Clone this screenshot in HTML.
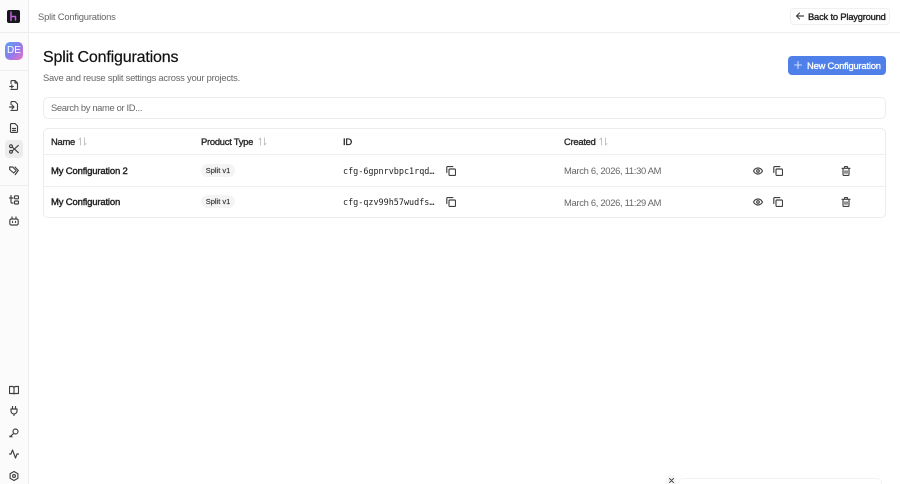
<!DOCTYPE html>
<html><head><meta charset="utf-8"><style>
*{box-sizing:border-box}
html,body{margin:0;padding:0;width:900px;height:484px;overflow:hidden;background:#fff;font-family:"Liberation Sans",sans-serif;color:#1a1a1a}
#r{position:relative;width:900px;height:484px;overflow:hidden;background:#fff}
.a{position:absolute;white-space:nowrap}
svg{position:absolute;fill:none;stroke:#404040;stroke-width:1.150;stroke-linecap:round;stroke-linejoin:round}
.th{font-size:9.400px;-webkit-text-stroke:.35px #2a2a2a;color:#2a2a2a;top:136px;line-height:12px;letter-spacing:-.25px}
.nm{font-size:9.500px;-webkit-text-stroke:.4px #222;color:#222;line-height:12px;left:51px;letter-spacing:-.17px}
.id{font-family:"DejaVu Sans Mono",monospace;font-size:8.450px;color:#222;left:343px;line-height:13px}
.dt{font-size:9.400px;color:#666;left:564px;line-height:12px;letter-spacing:-.3px}
.bd{left:201px;width:34px;height:13px;background:#f4f4f4;border-radius:7px;font-size:7.500px;line-height:13px;text-align:center;color:#333;-webkit-text-stroke:.15px #333}
.l{position:absolute;background:#eeeeee}
</style></head><body><div id="r">
<div class="a" style="left:0;top:0;width:29px;height:484px;background:#fbfbfb;border-right:1px solid #ededed"></div>
<div class="l" style="left:0;top:32px;width:900px;height:1px"></div>
<div class="l" style="left:0;top:70px;width:28px;height:1px"></div>
<div class="l" style="left:0;top:185px;width:28px;height:1px"></div>

<div class="a" style="left:7px;top:10px;width:13px;height:13px;background:#16161d;border-radius:2px"></div>
<svg style="left:7px;top:10px;stroke:#c45fe0;stroke-width:1.500" width="13" height="13" viewBox="0 0 13 13"><path d="M4 2v7M4 6.500h4.500V10M4 9v1.500"/></svg>
<div class="a" style="left:5px;top:42px;width:18px;height:18px;border-radius:5px;background:linear-gradient(135deg,#5aa5ee 0%,#8a7cf0 50%,#ee6fc0 100%);color:#fff;font-size:10px;line-height:18px;text-align:center">DE</div>

<div class="a" style="left:5px;top:140px;width:18px;height:18px;border-radius:4px;background:#ececec"></div>

<svg style="left:9px;top:80px" width="10" height="10" viewBox="0 0 10 10"><path d="M2 3.500V1.500a1 1 0 0 1 1-1h3l2.500 2.500v5.500a1 1 0 0 1-1 1H2M6 .5V3h2.500M.8 6.500h3.500M2.800 5v3"/></svg>
<svg style="left:9px;top:101px" width="10" height="10" viewBox="0 0 10 10"><path d="M2 3.500V1.500a1 1 0 0 1 1-1h3l2.500 2.500v5.500a1 1 0 0 1-1 1H2M.5 6h4.500M3 4l2 2-2 2"/></svg>
<svg style="left:9px;top:123px" width="10" height="10" viewBox="0 0 10 10"><path d="M1.500 1.500a1 1 0 0 1 1-1h3.500l2.500 2.500v5.500a1 1 0 0 1-1 1h-5a1 1 0 0 1-1-1zM3.500 5.500h3M3.500 7.500h3"/></svg>
<svg style="left:9px;top:144px" width="10" height="10" viewBox="0 0 10 10"><circle cx="2" cy="2.200" r="1.400"/><circle cx="2" cy="7.800" r="1.400"/><path d="M3.200 3L9.300 8.600M3.200 7L9.300 1.400"/></svg>
<svg style="left:9px;top:166px" width="10" height="10" viewBox="0 0 10 10"><path d="M.7 3.500V1h3l3.500 3.500-2.500 2.500zM6 1l3.300 3.500L6.200 8.600"/></svg>
<svg style="left:9px;top:195px" width="10" height="10" viewBox="0 0 10 10"><path d="M2 .5v6.500a1 1 0 0 0 1 1h1M.5 3h3.500"/><rect x="5.500" y=".8" width="4" height="3" rx=".8"/><rect x="5.500" y="6" width="4" height="3" rx=".8"/></svg>
<svg style="left:9px;top:216px" width="10" height="10" viewBox="0 0 10 10"><rect x=".8" y="3" width="8.400" height="6" rx="1.500"/><path d="M3 1v2M7 1v2M3.500 5.500v1M6.500 5.500v1"/></svg>

<svg style="left:9px;top:385px" width="10" height="10" viewBox="0 0 10 10"><path d="M5 2.200v6.600M.5 1.500h3A1.500 1.500 0 0 1 5 3a1.500 1.500 0 0 1 1.500-1.500h3v7h-3.500A1 1 0 0 0 5 9a1 1 0 0 0-1-.5H.5z"/></svg>
<svg style="left:9px;top:406px" width="10" height="10" viewBox="0 0 10 10"><path d="M3.500.5v2.500M6.500.5v2.500M2 3h6v2a3 3 0 0 1-6 0zM5 8v1.500"/></svg>
<svg style="left:9px;top:428px" width="10" height="10" viewBox="0 0 10 10"><circle cx="6.500" cy="3.500" r="2.500"/><path d="M4.700 5.300L1 9v-1M2 8l1 1"/></svg>
<svg style="left:9px;top:449px" width="10" height="10" viewBox="0 0 10 10"><path d="M.5 5h1.500l1.500-4 3 8 1.500-4h1.500"/></svg>
<svg style="left:9px;top:471px" width="10" height="10" viewBox="0 0 10 10"><path d="M5 .5l3.900 2.200v4.600L5 9.500 1.100 7.300V2.700z"/><circle cx="5" cy="5" r="1.400"/></svg>

<div class="a" style="left:38px;top:10px;font-size:9.400px;line-height:13px;color:#666;letter-spacing:-.18px">Split Configurations</div>

<div class="a" style="left:790px;top:8px;width:100px;height:17px;border:1px solid #f0f0f0;border-radius:4px;background:#fff"></div>
<svg style="left:795px;top:11px" width="10" height="10" viewBox="0 0 10 10"><path d="M8.500 5h-7M4.500 2l-3 3 3 3"/></svg>
<div class="a" style="left:808px;top:10px;font-size:9.400px;-webkit-text-stroke:.35px #222;line-height:13px;color:#222;letter-spacing:-.2px">Back to Playground</div>

<div class="a" style="left:43px;top:47px;font-size:16px;line-height:21px;color:#111;-webkit-text-stroke:.2px #111;letter-spacing:-.17px">Split Configurations</div>
<div class="a" style="left:43px;top:71px;font-size:9.400px;line-height:13px;color:#666;letter-spacing:-.235px">Save and reuse split settings across your projects.</div>

<div class="a" style="left:788px;top:56px;width:98px;height:19px;background:#4f7fe8;border-radius:4px"></div>
<svg style="left:793px;top:60px;stroke:#cfe0ff;stroke-width:1.100" width="10" height="10" viewBox="0 0 10 10"><path d="M5 1.500v7M1.500 5h7"/></svg>
<div class="a" style="left:807px;top:59px;font-size:9.400px;-webkit-text-stroke:.3px #fff;line-height:13px;color:#fff;letter-spacing:-.2px">New Configuration</div>

<div class="a" style="left:43px;top:97px;width:843px;height:22px;border:1px solid #ececec;border-radius:5px;background:#fff"></div>
<div class="a" style="left:51px;top:101px;font-size:9.400px;line-height:13px;color:#666;letter-spacing:-.35px">Search by name or ID...</div>

<div class="a" style="left:43px;top:128px;width:843px;height:90px;border:1px solid #ececec;border-radius:5px"></div>
<div class="l" style="left:44px;top:154px;width:841px;height:1px"></div>
<div class="l" style="left:44px;top:186px;width:841px;height:1px"></div>

<div class="a th" style="left:51px">Name</div>
<div class="a th" style="left:201px">Product Type</div>
<div class="a th" style="left:343px">ID</div>
<div class="a th" style="left:564px">Created</div>
<svg style="left:78px;top:137px;stroke:#c4c4c4;stroke-width:1" width="9" height="9" viewBox="0 0 9 9"><path d="M2.500 8V1L1 2.500M6.500 1v7L8 6.500"/></svg>
<svg style="left:258px;top:137px;stroke:#c4c4c4;stroke-width:1" width="9" height="9" viewBox="0 0 9 9"><path d="M2.500 8V1L1 2.500M6.500 1v7L8 6.500"/></svg>
<svg style="left:599px;top:137px;stroke:#c4c4c4;stroke-width:1" width="9" height="9" viewBox="0 0 9 9"><path d="M2.500 8V1L1 2.500M6.500 1v7L8 6.500"/></svg>

<div class="a nm" style="top:165px;line-height:13px">My Configuration 2</div>
<div class="a bd" style="top:164px">Split v1</div>
<div class="a id" style="top:165px">cfg-6gpnrvbpc1rqd…</div>
<div class="a dt" style="top:165px">March 6, 2026, 11:30 AM</div>

<div class="a nm" style="top:196px;line-height:13px">My Configuration</div>
<div class="a bd" style="top:195px">Split v1</div>
<div class="a id" style="top:196px">cfg-qzv99h57wudfs…</div>
<div class="a dt" style="top:196px;line-height:13px">March 6, 2026, 11:29 AM</div>

<svg style="left:446px;top:166px" width="10" height="10" viewBox="0 0 10 10"><rect x="3" y="3" width="6.500" height="6.500" rx="1"/><path d="M.8 6.500V1.500a1 1 0 0 1 1-1h5"/></svg>
<svg style="left:446px;top:197px" width="10" height="10" viewBox="0 0 10 10"><rect x="3" y="3" width="6.500" height="6.500" rx="1"/><path d="M.8 6.500V1.500a1 1 0 0 1 1-1h5"/></svg>
<svg style="left:753px;top:166px" width="10" height="10" viewBox="0 0 10 10"><path d="M.5 5C1.500 3 3 2 5 2s3.500 1 4.500 3c-1 2-2.500 3-4.500 3S1.500 7 .5 5z"/><circle cx="5" cy="5" r="1.300"/></svg>
<svg style="left:753px;top:197px" width="10" height="10" viewBox="0 0 10 10"><path d="M.5 5C1.500 3 3 2 5 2s3.500 1 4.500 3c-1 2-2.500 3-4.500 3S1.500 7 .5 5z"/><circle cx="5" cy="5" r="1.300"/></svg>
<svg style="left:773px;top:166px" width="10" height="10" viewBox="0 0 10 10"><rect x="3" y="3" width="6.500" height="6.500" rx="1"/><path d="M.8 6.500V1.500a1 1 0 0 1 1-1h5"/></svg>
<svg style="left:773px;top:197px" width="10" height="10" viewBox="0 0 10 10"><rect x="3" y="3" width="6.500" height="6.500" rx="1"/><path d="M.8 6.500V1.500a1 1 0 0 1 1-1h5"/></svg>
<svg style="left:841px;top:166px" width="10" height="10" viewBox="0 0 10 10"><path d="M1 2.300h8M3.500 2.300V1.200a.7.7 0 0 1 .7-.7h1.600a.7.7 0 0 1 .7.7v1.100M2 2.300v6.200a1 1 0 0 0 1 1h4a1 1 0 0 0 1-1V2.300M4 4.800v2.500M6 4.800v2.500"/></svg>
<svg style="left:841px;top:197px" width="10" height="10" viewBox="0 0 10 10"><path d="M1 2.300h8M3.500 2.300V1.200a.7.7 0 0 1 .7-.7h1.600a.7.7 0 0 1 .7.7v1.100M2 2.300v6.200a1 1 0 0 0 1 1h4a1 1 0 0 0 1-1V2.300M4 4.800v2.500M6 4.800v2.500"/></svg>

<div class="a" style="left:678px;top:478px;width:204px;height:20px;border:1px solid #f3f3f3;border-radius:5px;background:#fff"></div>
<div class="a" style="left:666px;top:475px;width:10px;height:9px;border-radius:5px 5px 0 0;background:#f6f6f6"></div>
<svg style="left:669px;top:478px;stroke:#444;stroke-width:.9" width="5" height="5" viewBox="0 0 5 5"><path d="M.5.5l4 4M4.500.5l-4 4"/></svg>
</div></body></html>
